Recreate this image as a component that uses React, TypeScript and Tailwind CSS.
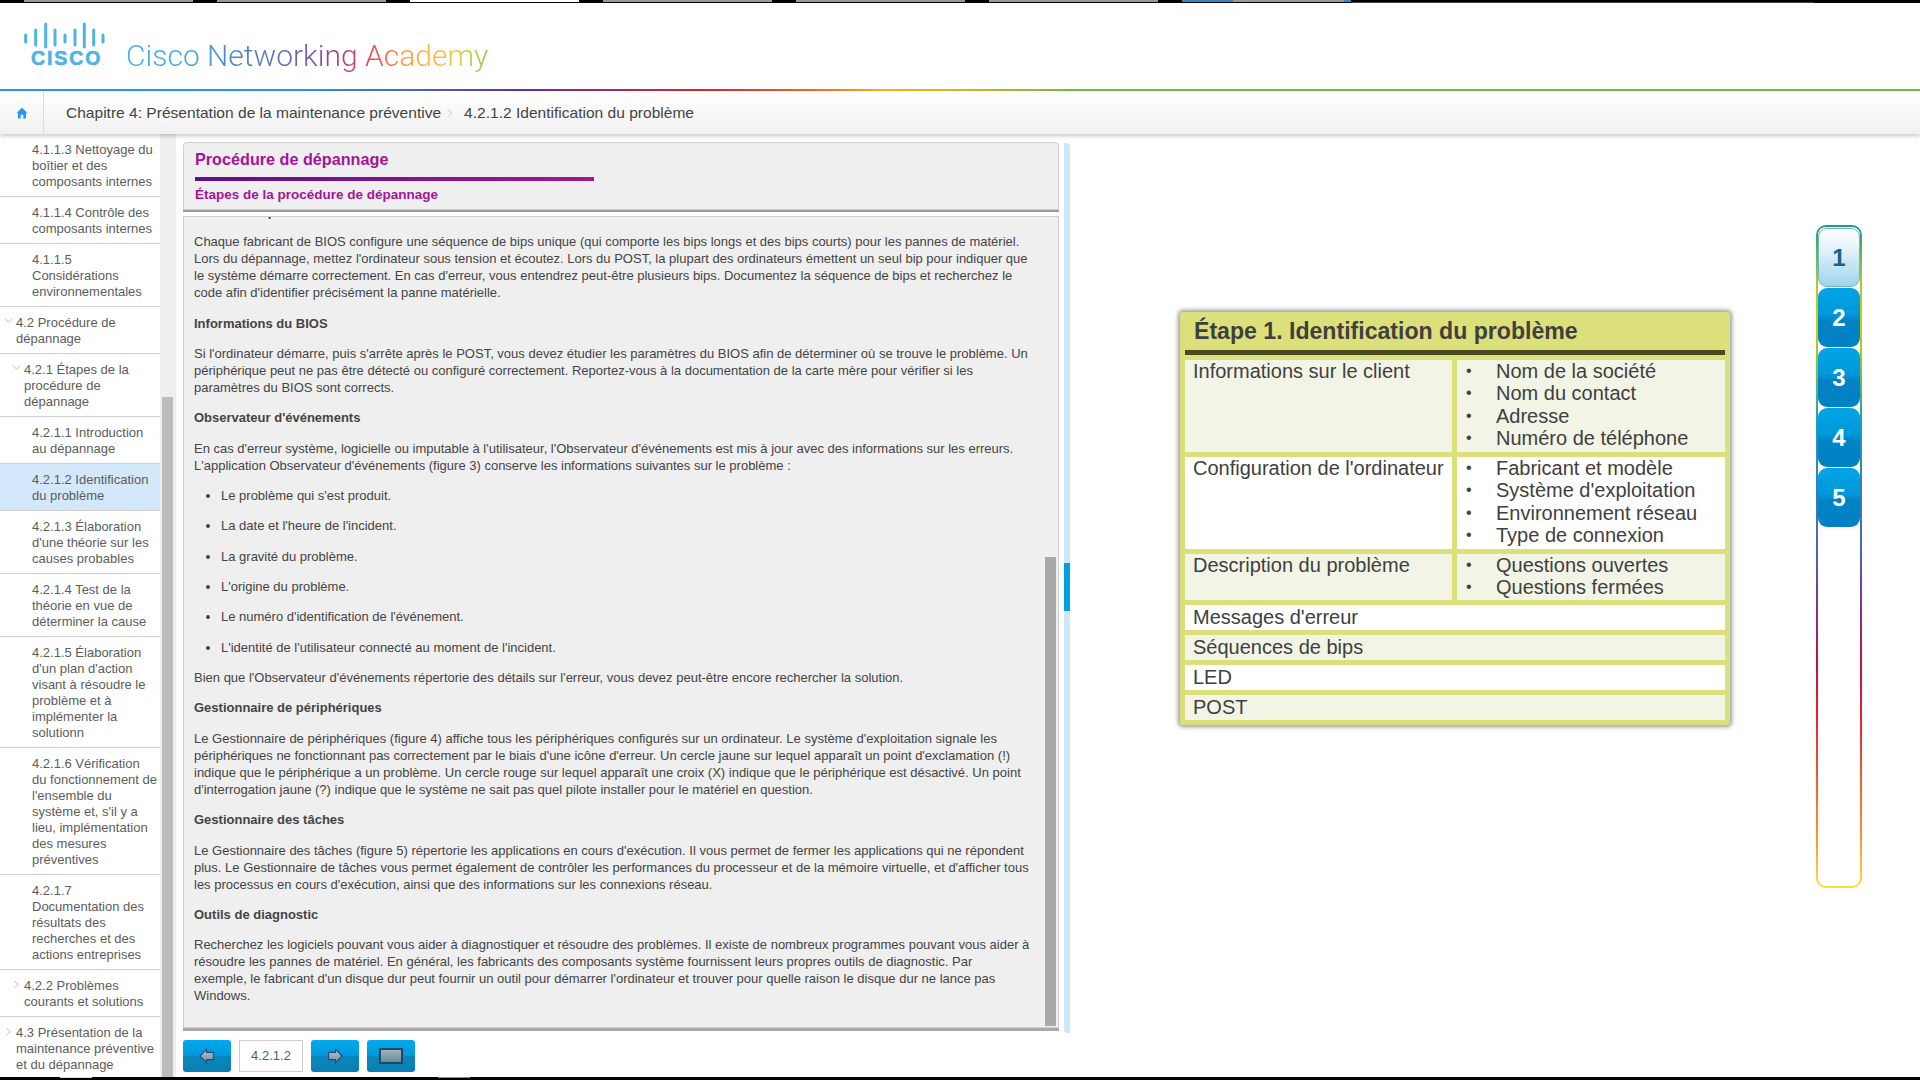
import { ChevronDown, ChevronRight } from "lucide-react";

const sans = "font-['Liberation_Sans',Arial,sans-serif]";

interface NavItem {
  label: string;
  level: 1 | 2 | 3;
  open?: boolean;
  closed?: boolean;
  active?: boolean;
}

const navItems: NavItem[] = [
  { label: "4.1.1.3 Nettoyage du boîtier et des composants internes", level: 3 },
  { label: "4.1.1.4 Contrôle des composants internes", level: 3 },
  { label: "4.1.1.5 Considérations environnementales", level: 3 },
  { label: "4.2 Procédure de dépannage", level: 1, open: true },
  { label: "4.2.1 Étapes de la procédure de dépannage", level: 2, open: true },
  { label: "4.2.1.1 Introduction au dépannage", level: 3 },
  { label: "4.2.1.2 Identification du problème", level: 3, active: true },
  { label: "4.2.1.3 Élaboration d'une théorie sur les causes probables", level: 3 },
  { label: "4.2.1.4 Test de la théorie en vue de déterminer la cause", level: 3 },
  { label: "4.2.1.5 Élaboration d'un plan d'action visant à résoudre le problème et à implémenter la solutionn", level: 3 },
  { label: "4.2.1.6 Vérification\ndu fonctionnement de l'ensemble du système et, s'il y a lieu, implémentation des mesures préventives", level: 3 },
  { label: "4.2.1.7 Documentation des résultats des recherches et des actions entreprises", level: 3 },
  { label: "4.2.2 Problèmes courants et solutions", level: 2, closed: true },
  { label: "4.3 Présentation de la maintenance préventive et du dépannage", level: 1, closed: true },
];

function SideItem({ item }: { item: NavItem }) {
  const pad = item.level === 3 ? "pl-8" : item.level === 2 ? "pl-6" : "pl-4";
  const iconPos = item.level === 2 ? "left-[10px]" : "left-[2px]";
  return (
    <div
      className={`relative ${pad} pr-[2px] pt-[8px] pb-[6px] border-b border-[#cfcfcf] text-[13px] leading-4 text-[#5c5c5c] whitespace-pre-line ${
        item.active ? "bg-[#d3e8fa]" : "bg-white"
      }`}
    >
      {item.open && <ChevronDown size={13} strokeWidth={1.2} className={`absolute top-[7px] ${iconPos} text-[#999]`} />}
      {item.closed && <ChevronRight size={13} strokeWidth={1.2} className={`absolute top-[8px] ${iconPos} text-[#999]`} />}
      {item.label}
    </div>
  );
}

function Sidebar() {
  return (
    <div className="w-[176px] shrink-0 flex overflow-hidden">
      <div className="w-[160px] shrink-0">
        {navItems.map((item) => (
          <SideItem key={item.label} item={item} />
        ))}
      </div>
      <div className="w-[16px] bg-[#efefef] pl-[2px] pr-[3px] pt-[263px]">
        <div className="h-full bg-[#bdbdbd]" />
      </div>
    </div>
  );
}

function Logo() {
  const bars = [
    [25.7, 35, 42],
    [35.7, 30, 45],
    [45.7, 24, 47],
    [55, 30, 45],
    [65, 35, 42],
    [75, 30, 45],
    [84.3, 24, 47],
    [93.7, 30, 45],
    [103, 35, 42],
  ];
  return (
    <div className="w-[126px] shrink-0 relative">
      <svg width="127" height="50" viewBox="0 20 127 50" className="block">
        {bars.map(([x, y1, y2]) => (
          <line key={x} x1={x} x2={x} y1={y1} y2={y2} stroke="#4fb3e3" strokeWidth="3" strokeLinecap="round" />
        ))}
      </svg>
      <span className={`absolute left-[31px] top-[26px] ${sans} font-bold text-[19.5px] leading-6 tracking-[1.9px] text-[#4fb3e3] [-webkit-text-stroke:0.6px_#4fb3e3]`}>
        CISCO<span className="text-[6px] font-normal tracking-normal [-webkit-text-stroke:0]">.</span>
      </span>
    </div>
  );
}

function Header() {
  return (
    <div className="h-[86px] bg-white flex pt-[17px] items-start">
      <Logo />
      <span className="mt-[18px] font-['Roboto',sans-serif] font-light text-[30px] leading-9 text-transparent bg-clip-text bg-[linear-gradient(90deg,#45b1e4_0%,#45a5e0_18%,#4c88cf_30%,#6a5fb0_50%,#a0418c_60%,#f04452_68%,#ff6a45_72%,#ff9440_76%,#fbb740_84%,#e8c84a_92%,#8fc84f_100%)]">
        Cisco Networking Academy
      </span>
    </div>
  );
}

function Breadcrumb() {
  return (
    <div className={`relative z-10 h-[43px] flex items-center bg-[linear-gradient(180deg,#ffffff,#f1f1f1)] shadow-[0_2px_4px_rgba(0,0,0,0.22)] ${sans} text-[15.55px] text-[#444]`}>
      <div className="w-[44px] h-full flex items-center justify-center border-r border-[#dcdcdc]">
        <svg width="12" height="12" viewBox="0 0 12 12" fill="#2196f3">
          <path d="M6 .8 11.6 6.2H10v5.2H7.3V7.8H4.7v3.6H2V6.2H.4z" />
        </svg>
      </div>
      <span className="ml-[22px]">Chapitre 4: Présentation de la maintenance préventive</span>
      <ChevronRight size={14} strokeWidth={1} className="mx-[2px] text-[#999]" />
      <span className="ml-[5px]">4.2.1.2 Identification du problème</span>
    </div>
  );
}

function P({ children, bold }: { children: React.ReactNode; bold?: boolean }) {
  return <p className={`mb-[13.35px] ${bold ? "font-bold" : ""}`}>{children}</p>;
}

function Bullet({ children }: { children: React.ReactNode }) {
  return <li className="mb-[13.35px] pl-0">{children}</li>;
}

function Article() {
  return (
    <div className="flex-1 overflow-hidden pl-[10px] pr-[13px] -mt-[14px]">
      <P bold>Codes de bips du BIOS</P>
      <P>
        Chaque fabricant de BIOS configure une séquence de bips unique (qui comporte les bips longs et des bips courts) pour les pannes de matériel. Lors du dépannage, mettez l'ordinateur sous tension et écoutez. Lors du POST, la plupart des ordinateurs émettent un seul bip pour indiquer que le système démarre correctement. En cas d'erreur, vous entendrez peut-être plusieurs bips. Documentez la séquence de bips et recherchez le code afin d'identifier précisément la panne matérielle.
      </P>
      <P bold>Informations du BIOS</P>
      <P>
        Si l'ordinateur démarre, puis s'arrête après le POST, vous devez étudier les paramètres du BIOS afin de déterminer où se trouve le problème. Un périphérique peut ne pas être détecté ou configuré correctement. Reportez-vous à la documentation de la carte mère pour vérifier si les paramètres du BIOS sont corrects.
      </P>
      <P bold>Observateur d'événements</P>
      <P>
        En cas d'erreur système, logicielle ou imputable à l'utilisateur, l'Observateur d'événements est mis à jour avec des informations sur les erreurs. L'application Observateur d'événements (figure 3) conserve les informations suivantes sur le problème :
      </P>
      <ul className="list-disc pl-[27px]">
        <Bullet>Le problème qui s'est produit.</Bullet>
        <Bullet>La date et l'heure de l'incident.</Bullet>
        <Bullet>La gravité du problème.</Bullet>
        <Bullet>L'origine du problème.</Bullet>
        <Bullet>Le numéro d'identification de l'événement.</Bullet>
        <Bullet>L'identité de l'utilisateur connecté au moment de l'incident.</Bullet>
      </ul>
      <P>Bien que l'Observateur d'événements répertorie des détails sur l'erreur, vous devez peut-être encore rechercher la solution.</P>
      <P bold>Gestionnaire de périphériques</P>
      <P>
        Le Gestionnaire de périphériques (figure 4) affiche tous les périphériques configurés sur un ordinateur. Le système d'exploitation signale les périphériques ne fonctionnant pas correctement par le biais d'une icône d'erreur. Un cercle jaune sur lequel apparaît un point d'exclamation (!) indique que le périphérique a un problème. Un cercle rouge sur lequel apparaît une croix (X) indique que le périphérique est désactivé. Un point d'interrogation jaune (?) indique que le système ne sait pas quel pilote installer pour le matériel en question.
      </P>
      <P bold>Gestionnaire des tâches</P>
      <P>
        Le Gestionnaire des tâches (figure 5) répertorie les applications en cours d'exécution. Il vous permet de fermer les applications qui ne répondent plus. Le Gestionnaire de tâches vous permet également de contrôler les performances du processeur et de la mémoire virtuelle, et d'afficher tous les processus en cours d'exécution, ainsi que des informations sur les connexions réseau.
      </P>
      <P bold>Outils de diagnostic</P>
      <P>
        Recherchez les logiciels pouvant vous aider à diagnostiquer et résoudre des problèmes. Il existe de nombreux programmes pouvant vous aider à résoudre les pannes de matériel. En général, les fabricants des composants système fournissent leurs propres outils de diagnostic. Par
        <br />
        exemple, le fabricant d'un disque dur peut fournir un outil pour démarrer l'ordinateur et trouver pour quelle raison le disque dur ne lance pas Windows.
      </P>
    </div>
  );
}

function NavButton({ children }: { children: React.ReactNode }) {
  return (
    <div className="w-[48px] h-[32px] rounded-[3px] flex items-center justify-center bg-[linear-gradient(180deg,#00aaee_0%,#0098da_50%,#0a86bc_50%,#0a7fb2_100%)]">
      {children}
    </div>
  );
}

function Arrow({ flip }: { flip?: boolean }) {
  return (
    <svg width="16" height="16" viewBox="0 0 16 16" className={flip ? "-scale-x-100" : ""}>
      <defs>
        <linearGradient id={flip ? "arrow-r" : "arrow-l"} x1="0" y1="0" x2="0" y2="1">
          <stop offset="0" stopColor="#b9c3d4" />
          <stop offset="1" stopColor="#7a8ba8" />
        </linearGradient>
      </defs>
      <path d="M1 8 7.5 1.2V4.4H14.4V11.6H7.5V14.8Z" fill={`url(#${flip ? "arrow-r" : "arrow-l"})`} stroke="#1e4e78" strokeWidth="1.1" />
    </svg>
  );
}

function Content() {
  return (
    <div className={`w-[876px] shrink-0 pt-[8px] flex flex-col ${sans}`}>
      <div className="h-[68px] shrink-0 bg-[#efefef] border border-[#cfcfcf] rounded-t-[4px] px-[11px] pt-[6px] shadow-[0_2px_0_#9a9a9a]">
        <h1 className="text-[16.2px] leading-5 font-bold text-[#a3149b]">Procédure de dépannage</h1>
        <div className="w-[399px] h-[4px] mt-[8px] bg-[linear-gradient(90deg,#5f0f8c,#a0188f)]" />
        <h2 className="mt-[6px] text-[13.5px] leading-4 font-bold text-[#a3149b]">Étapes de la procédure de dépannage</h2>
      </div>
      <div className="h-[812px] shrink-0 mt-[6px] bg-[#efefef] border border-[#cfcfcf] flex text-[13px] leading-[17px] text-[#444] shadow-[0_3px_0_#a8a8a8] overflow-hidden">
        <Article />
        <div className="w-[11px] shrink-0 mr-[2px] pt-[340px] pb-[1px]">
          <div className="h-full bg-[#a9a9a9]" />
        </div>
      </div>
      <div className="mt-[12px] flex gap-2">
        <NavButton>
          <Arrow />
        </NavButton>
        <div className="w-[64px] h-[32px] bg-white border border-[#cfcfcf] flex items-center justify-center text-[13px] text-[#5c5c5c]">4.2.1.2</div>
        <NavButton>
          <Arrow flip />
        </NavButton>
        <NavButton>
          <div className="w-[24px] h-[16px] border-2 border-[#1f4a66] bg-[linear-gradient(180deg,#a3b3bc,#6a8a9a)]" />
        </NavButton>
      </div>
    </div>
  );
}

function Strip() {
  return (
    <div className="ml-[5px] mt-[9px] w-[6px] h-[890px] shrink-0 bg-[#cde9f8] rounded-tr-[4px] rounded-bl-[4px] pt-[420px]">
      <div className="h-[48px] bg-[#00a0e3]" />
    </div>
  );
}

interface TableRow {
  title: string;
  items: string[];
  white?: boolean;
  h: string;
}

const rows: TableRow[] = [
  { title: "Informations sur le client", items: ["Nom de la société", "Nom du contact", "Adresse", "Numéro de téléphone"], h: "h-[92px]" },
  { title: "Configuration de l'ordinateur", items: ["Fabricant et modèle", "Système d'exploitation", "Environnement réseau", "Type de connexion"], white: true, h: "h-[92px]" },
  { title: "Description du problème", items: ["Questions ouvertes", "Questions fermées"], h: "h-[46px]" },
];

const fullRows = ["Messages d'erreur", "Séquences de bips", "LED", "POST"];

function StepCard() {
  return (
    <div className={`ml-[110px] mt-[178px] w-[550px] h-[413px] shrink-0 bg-[#dce07a] rounded-[3px] px-[5px] shadow-[0_0_4px_2px_rgba(0,0,0,0.4)] ${sans} text-[20px] leading-[22.4px] text-[#404040]`}>
      <h3 className="h-[38px] pl-[9px] pt-[4px] text-[23.1px] leading-[30px] font-bold">Étape 1. Identification du problème</h3>
      <div className="h-[5px] bg-[#4a4a20]" />
      <div className="mt-[5px] flex flex-col gap-[5px]">
        {rows.map((row) => (
          <div key={row.title} className={`flex gap-[5px] ${row.h}`}>
            <div className={`w-[267px] pl-[8px] ${row.white ? "bg-white" : "bg-[#f2f4e6]"}`}>{row.title}</div>
            <ul className={`flex-1 pl-[9px] ${row.white ? "bg-white" : "bg-[#f2f4e6]"}`}>
              {row.items.map((item) => (
                <li key={item} className="flex">
                  <span className="w-[30px] shrink-0 text-[16px]">•</span>
                  {item}
                </li>
              ))}
            </ul>
          </div>
        ))}
        {fullRows.map((label, i) => (
          <div key={label} className={`h-[25px] pl-[8px] leading-[25px] ${i % 2 === 0 ? "bg-white" : "bg-[#f2f4e6]"}`}>
            {label}
          </div>
        ))}
      </div>
    </div>
  );
}

function StepRail() {
  return (
    <div className={`ml-[86px] mt-[91px] w-[46px] h-[663px] shrink-0 rounded-[10px] p-[2px] bg-[linear-gradient(180deg,#1a9a8f_0%,#a8c830_8%,#c3d500_16%,#1aa0b0_30%,#3a78c0_42%,#5060b8_50%,#7040a0_55%,#c01040_66%,#e82030_74%,#f06030_84%,#ff9030_92%,#ffdc40_100%)] ${sans}`}>
      <div className="h-full rounded-[8px] bg-white flex flex-col gap-[1px] pt-[1px]">
        {[1, 2, 3, 4, 5].map((n) => (
          <div
            key={n}
            className={`h-[59px] rounded-[9px] flex items-center justify-center text-[24px] font-bold ${
              n === 1
                ? "text-[#1a5f8a] bg-[linear-gradient(180deg,#ffffff_0%,#e8f5fb_30%,#9fd4ec_100%)] border border-[#6fb4cc]"
                : "text-white bg-[linear-gradient(180deg,#00a5e6_0%,#0098da_45%,#0082c4_55%,#0082c4_100%)]"
            }`}
          >
            {n}
          </div>
        ))}
      </div>
    </div>
  );
}

function TopTabs() {
  return (
    <div className="h-[3px] bg-black flex gap-[24px] pl-[24px]">
      <div className="w-[169px] h-[2px] bg-[#9a9a9a]" />
      <div className="w-[169px] h-[2px] bg-[#9a9a9a]" />
      <div className="w-[169px] h-[2px] bg-white" />
      <div className="w-[169px] h-[2px] bg-[#9a9a9a]" />
      <div className="w-[169px] h-[2px] bg-[#9a9a9a]" />
      <div className="w-[169px] h-[2px] bg-[#9a9a9a]" />
      <div className="w-[169px] h-[2px] bg-[linear-gradient(90deg,#3f7fc4_0%,#3f7fc4_30%,#9a9a9a_30%,#9a9a9a_96%,#3f7fc4_96%)]" />
      <div className="w-[463px] -ml-[24px] mt-[2px] h-[1px] bg-[#444]" />
    </div>
  );
}

export default function App() {
  return (
    <div className={`w-[1920px] h-[1080px] overflow-hidden flex flex-col bg-white ${sans}`}>
      <TopTabs />
      <Header />
      <div className="h-[2px] bg-[linear-gradient(90deg,#1ea3dc_0%,#1ea3dc_15%,#4b6cb7_21%,#6a2f9a_27%,#e0262f_37%,#ff6020_42%,#ffae1a_46%,#d8b820_50%,#74bc44_56%,#74bc44_100%)]" />
      <Breadcrumb />
      <div className="flex-1 flex overflow-hidden">
        <Sidebar />
        <div className="w-[7px] shrink-0" />
        <Content />
        <Strip />
        <StepCard />
        <StepRail />
      </div>
      <div className="h-[3px] shrink-0 bg-black flex pl-[60px]">
        <div className="w-[32px] h-[1px] bg-[#ddd]" />
        <div className="ml-[346px] w-[32px] h-[1px] bg-[#888]" />
      </div>
    </div>
  );
}
